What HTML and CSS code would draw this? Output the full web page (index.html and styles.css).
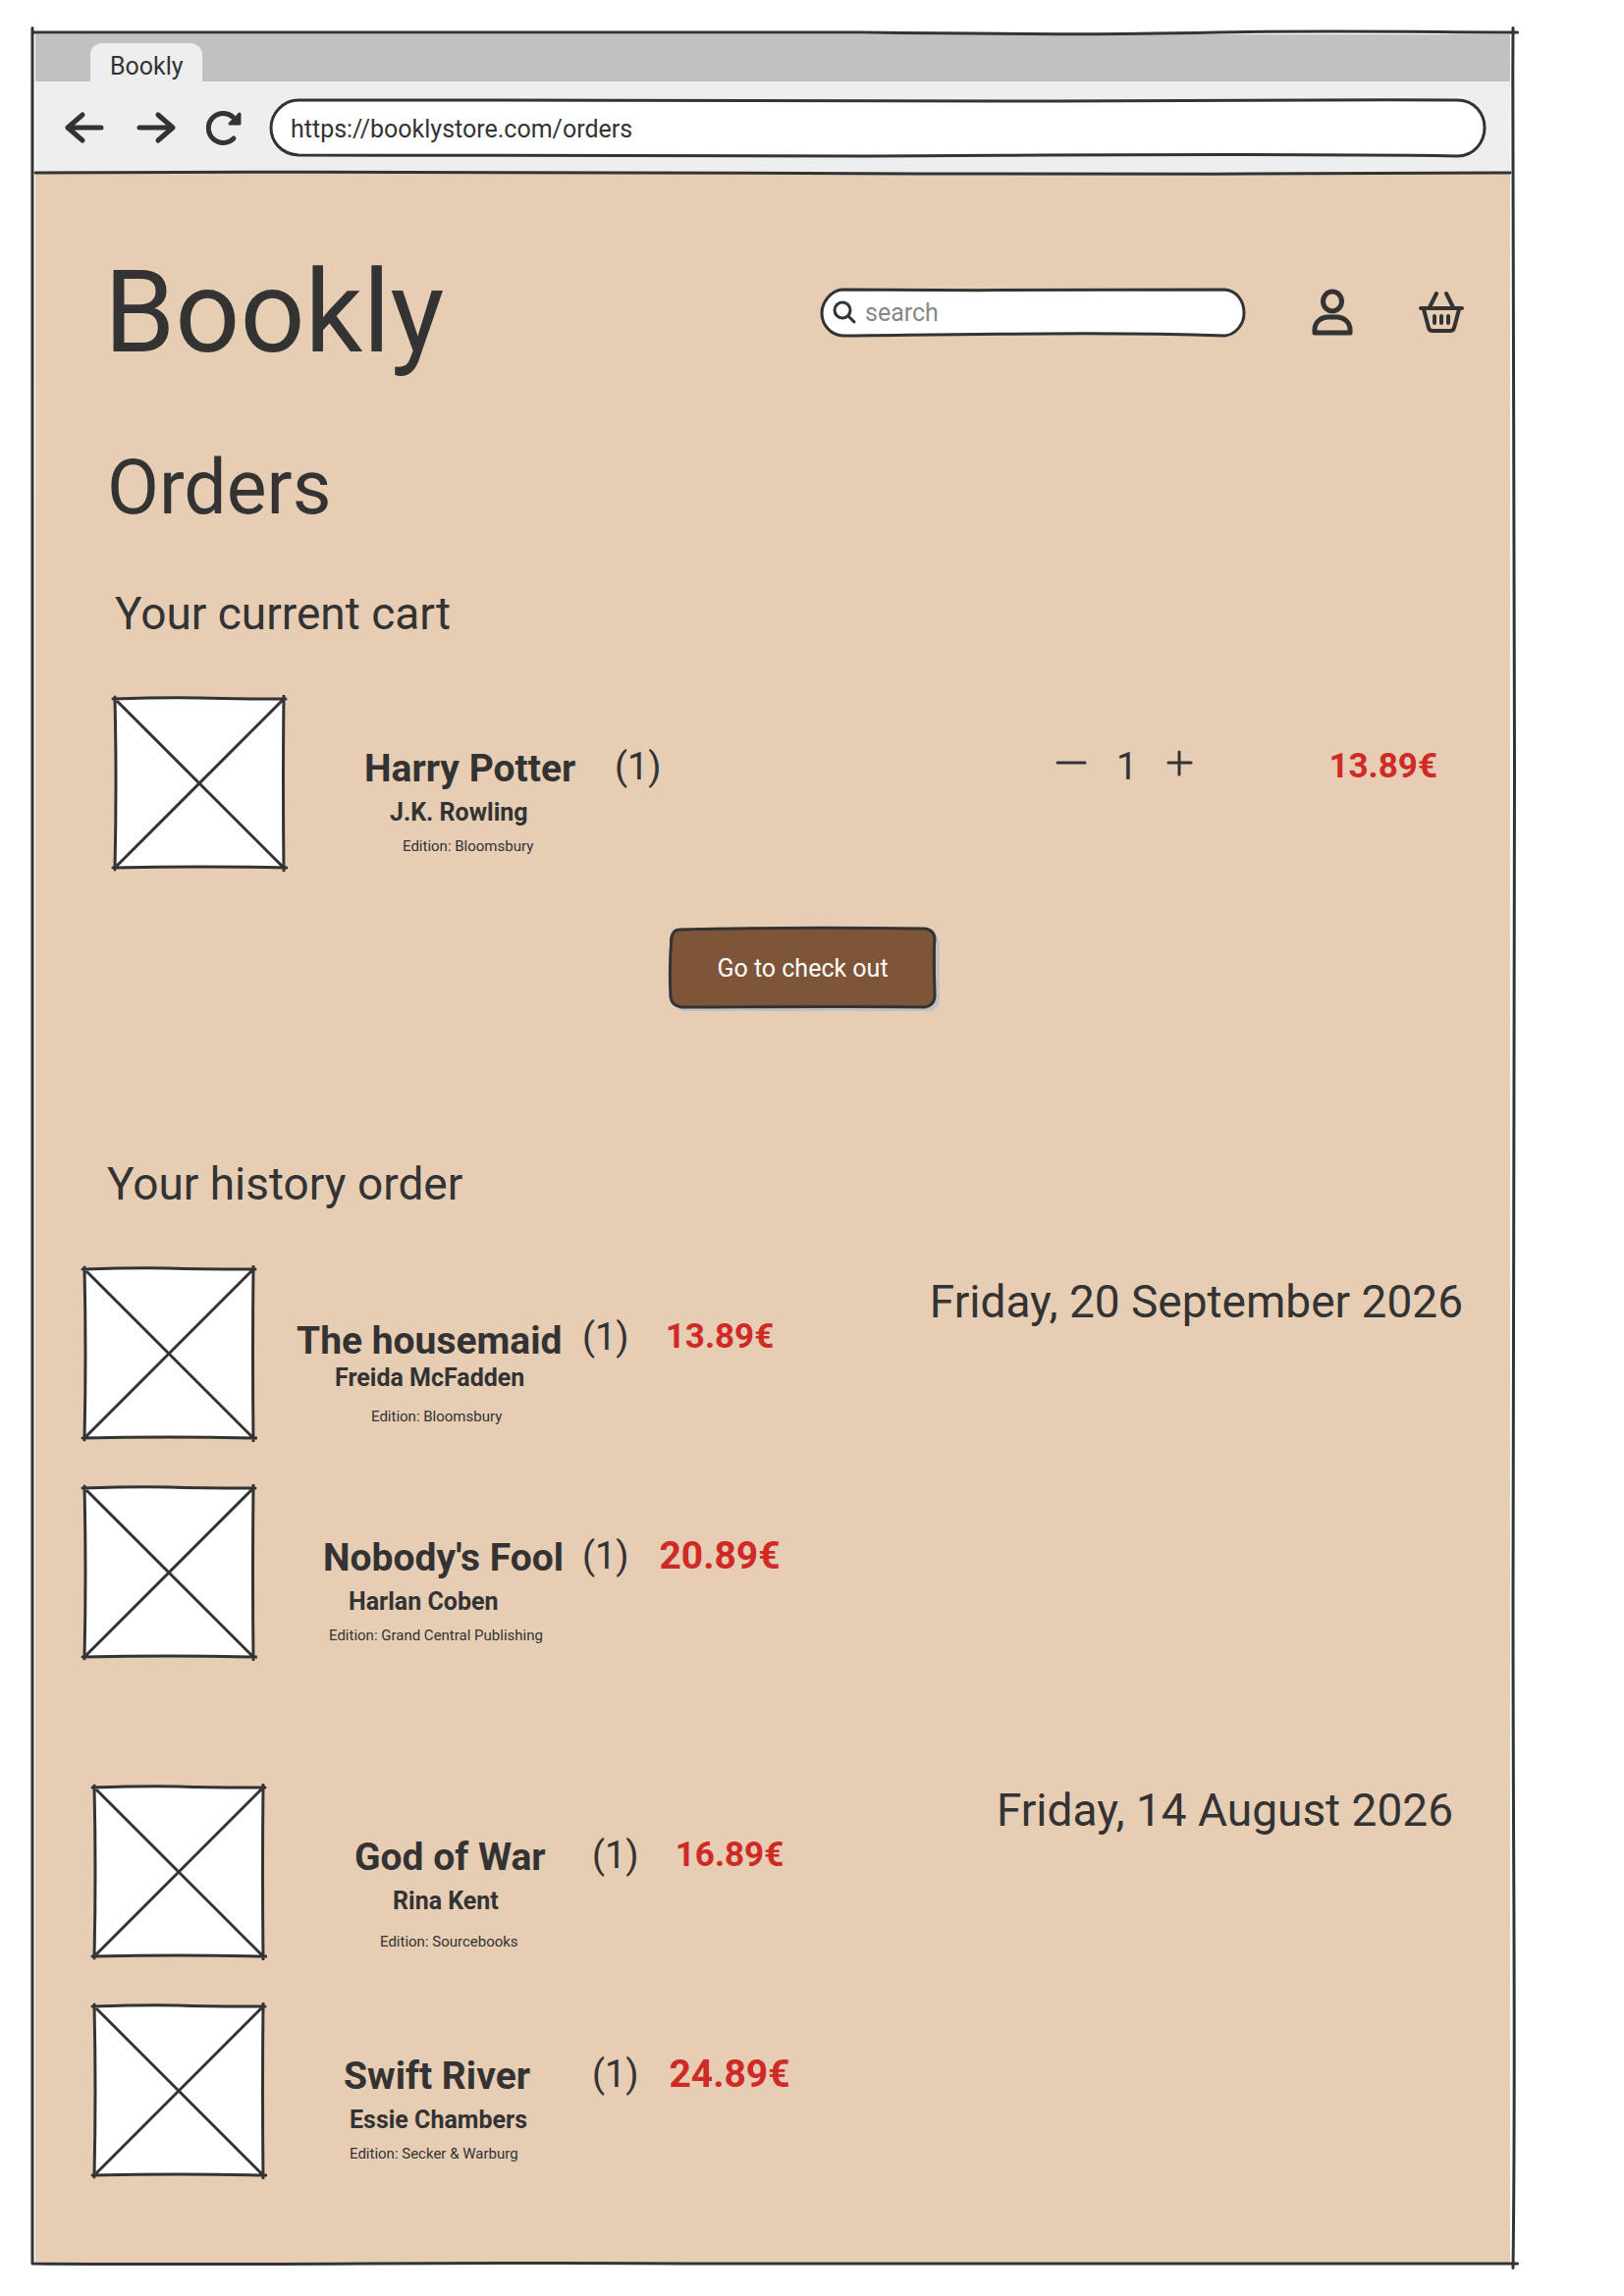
FILE: index.html
```html
<!DOCTYPE html>
<html lang="en">
<head>
<meta charset="utf-8">
<meta name="viewport" content="width=device-width, initial-scale=1">
<title>Bookly</title>
<link rel="stylesheet" href="styles.css">
</head>
<body>
<svg class="defs" aria-hidden="true">
  <symbol id="cover" viewBox="0 0 180 180">
    <path class="paper" d="M4 4H176V176H4Z"/>
    <path d="M2 4Q60 2 90 3T178 4M4 2Q6 90 4 178M176 1Q175 90 176 179M2 176Q90 174 179 176M7 7L176 176M176 4L7 173"/>
  </symbol>
</svg>
<div class="window">
  <svg class="outline" viewBox="0 0 1000 1000" preserveAspectRatio="none" aria-hidden="true">
    <path d="M0 0C200 -1 400 -1 560 0S720 1 800 0S950 0 1003 0M0 -2C1 200 -1 300 0 500S-1 800 0 1000M1000 -2C999 100 1001 200 1001 330S1000 560 1000 700S1002 900 1000 1002M0 1000C150 1001 300 999 450 1000S800 999 1003 1000"/>
  </svg>
  <header class="browser">
    <div class="tabs"><div class="tab">Bookly</div></div>
    <div class="toolbar">
      <button class="nav" aria-label="Back"><svg width="40" height="34" viewBox="0 0 40 34"><path d="M37 17H3M18 4L3 17L18 30"/></svg></button>
      <button class="nav" aria-label="Forward"><svg width="40" height="34" viewBox="0 0 40 34"><path d="M3 17H37M22 4L37 17L22 30"/></svg></button>
      <button class="nav" aria-label="Reload"><svg width="40" height="38" viewBox="4 0 40 38"><path d="M30 30A15 15 0 1 1 29 8"/><path class="solid" d="M36 5V15H26Z"/></svg></button>
      <div class="field address">
        <svg class="outline" viewBox="0 0 1236 58" preserveAspectRatio="none" aria-hidden="true"><path class="paper" d="M28 1C300 -1 500 4 800 2S1100 1 1208 1C1226 1 1236 15 1236 29S1226 58 1208 58C1000 55 850 57 600 58S200 57 28 57C10 56 0 43 0 29S12 1 28 1Z"/></svg>
        <input type="text" value="https://booklystore.com/orders" aria-label="Address">
      </div>
    </div>
    <svg class="rule" viewBox="0 0 1000 6" preserveAspectRatio="none" aria-hidden="true"><path d="M0 3C200 1 400 3 600 4S800 4 1000 3"/></svg>
  </header>

  <main class="page">
    <div class="masthead">
      <a class="brand" href="#">Bookly</a>
      <div class="field search">
        <svg class="outline" viewBox="0 0 430 47" preserveAspectRatio="none" aria-hidden="true"><path class="paper" d="M21 0C150 1 300 1 410 0C423 1 430 12 430 24S421 46 410 47C300 43 200 45 21 47C8 46 0 35 0 24S9 1 21 0Z"/></svg>
        <svg class="lens" width="25" height="25" viewBox="0 0 25 25" aria-hidden="true"><circle cx="10" cy="10" r="8"/><path d="M16 16L22 22"/></svg>
        <input type="search" placeholder="search" aria-label="Search">
      </div>
      <a class="icon account" href="#" aria-label="Account"><svg width="42" height="48" viewBox="0 0 42 48"><ellipse cx="21" cy="13" rx="9.500" ry="10"/><path d="M3 45V42C3 33 11 29 16 29H26C31 29 39 33 39 42V45Z"/></svg></a>
      <a class="icon" href="#" aria-label="Basket"><svg width="48" height="44" viewBox="0 0 48 44"><path d="M3 18H45M12 17L19 3M36 17L29 3M6 19L11 38Q12 41 15 41H33Q36 41 37 38L42 19M17 26V33M24 26V33M31 26V33"/></svg></a>
    </div>

    <h1>Orders</h1>

    <section class="cart">
      <h2>Your current cart</h2>
      <article class="book">
        <svg class="cover" role="img" aria-label="Harry Potter cover"><use href="#cover"/></svg>
        <div class="info start-l">
          <h3>Harry Potter</h3>
          <p class="author in-m">J.K. Rowling</p>
          <p class="edition in-l">Edition: Bloomsbury</p>
        </div>
        <span class="count">(1)</span>
        <div class="stepper">
          <button aria-label="Remove one"><svg width="34" height="28" viewBox="0 0 34 28"><path d="M3 14H31"/></svg></button>
          <output>1</output>
          <button aria-label="Add one"><svg width="28" height="28" viewBox="0 0 28 28"><path d="M3 14H26M14 3V26"/></svg></button>
        </div>
        <span class="price">13.89€</span>
      </article>
      <div class="actions">
        <button class="checkout">
          <svg class="outline" viewBox="0 0 271 80" preserveAspectRatio="none" aria-hidden="true"><path d="M10 1C90 -1 180 -1 260 0C267 1 270 5 270 11C268 30 270 50 270 70C269 76 266 79 260 80C180 79 90 80 12 80C5 79 2 76 1 70C0 50 0 30 2 9C3 4 5 1 10 1Z"/></svg>
          <span>Go to check out</span>
        </button>
      </div>
    </section>

    <section class="history">
      <h2>Your history order</h2>
      <section class="order">
        <div class="books">
          <article class="book">
            <svg class="cover" role="img" aria-label="The housemaid cover"><use href="#cover"/></svg>
            <div class="info start-s close">
              <h3>The housemaid</h3>
              <p class="author in-l">Freida McFadden</p>
              <p class="edition in-xl">Edition: Bloomsbury</p>
            </div>
            <span class="count">(1)</span>
            <span class="price">13.89€</span>
          </article>
          <article class="book">
            <svg class="cover" role="img" aria-label="Nobody's Fool cover"><use href="#cover"/></svg>
            <div class="info start-m">
              <h3>Nobody's Fool</h3>
              <p class="author in-m">Harlan Coben</p>
              <p class="edition in-s">Edition: Grand Central Publishing</p>
            </div>
            <span class="count">(1)</span>
            <span class="price large">20.89€</span>
          </article>
        </div>
        <time datetime="2026-09-20">Friday, 20 September 2026</time>
      </section>
      <section class="order inset">
        <div class="books">
          <article class="book">
            <svg class="cover" role="img" aria-label="God of War cover"><use href="#cover"/></svg>
            <div class="info start-xl open">
              <h3>God of War</h3>
              <p class="author in-l">Rina Kent</p>
              <p class="edition in-m">Edition: Sourcebooks</p>
            </div>
            <span class="count">(1)</span>
            <span class="price">16.89€</span>
          </article>
          <article class="book">
            <svg class="cover" role="img" aria-label="Swift River cover"><use href="#cover"/></svg>
            <div class="info start-l">
              <h3>Swift River</h3>
              <p class="author in-s">Essie Chambers</p>
              <p class="edition in-s">Edition: Secker &amp; Warburg</p>
            </div>
            <span class="count">(1)</span>
            <span class="price large">24.89€</span>
          </article>
        </div>
        <time datetime="2026-08-14">Friday, 14 August 2026</time>
      </section>
    </section>
  </main>
</div>
</body>
</html>
```
FILE: styles.css
```css
:root {
  --ink: #333;
  --sand: #e6cdb4;
  --red: #d02a26;
}
* { box-sizing: border-box; }
body {
  margin: 0;
  padding: 33px 113px 35px 33px;
  background: #fff;
  color: var(--ink);
  font-family: Roboto, "Liberation Sans", sans-serif;
  font-size: 25px;
}
h1, h2, h3, p { margin: 0; font-weight: 400; }
a { color: inherit; text-decoration: none; }
button {
  padding: 0;
  border: 0;
  background: none;
  color: inherit;
  font: inherit;
  cursor: pointer;
}
input {
  width: 100%;
  min-width: 0;
  padding: 0;
  border: 0;
  outline: 0;
  background: none;
  color: inherit;
  font: inherit;
}
svg {
  display: block;
  overflow: visible;
  fill: none;
  stroke: var(--ink);
  stroke-width: 3px;
  stroke-linecap: round;
  stroke-linejoin: round;
}
.defs { position: absolute; width: 0; height: 0; }
.paper { fill: #fff; }
#cover .paper { stroke: none; }

/* Hand-drawn outlines stretch with the box that they frame */
.outline {
  position: absolute;
  inset: 0;
  width: 100%;
  height: 100%;
  pointer-events: none;
}
.outline path, .rule path { vector-effect: non-scaling-stroke; }

.window { position: relative; padding: 2px 3px 1px 3px; }
.window > .outline { z-index: 1; }

/* Browser chrome */
.tabs {
  display: flex;
  height: 48px;
  padding: 9px 56px 0;
  background: #c1c1c1;
}
.tab {
  padding: 9px 19px 0 20px;
  border-radius: 12px 12px 0 0;
  background: #eee;
  line-height: 30px;
}
.toolbar {
  display: flex;
  align-items: center;
  height: 93px;
  padding: 0 26px 0 27px;
  background: #eee;
}
.nav { width: 46px; margin-right: 27px; }
.nav svg { margin: 0 auto; stroke-width: 5px; }
.nav .solid { fill: var(--ink); stroke-width: 3px; }
.field { position: relative; display: flex; align-items: center; }
.field input { position: relative; }
.address { flex: 1; height: 58px; margin-left: -6px; padding: 4px 20px 0; }
.rule { width: 100%; height: 6px; margin: -3px 0; position: relative; }

/* Shop page */
.page { padding: 74px 46px 89px 50px; background: var(--sand); }
.masthead { display: flex; align-items: center; padding-left: 20px; }
.brand { flex: 1; font-size: 116px; line-height: 136px; }
.search { width: 430px; height: 47px; gap: 8px; padding: 0 16px 0 11px; }
.search .lens { position: relative; flex: none; }
.search input::placeholder { color: #888; opacity: 1; }
.icon svg { stroke-width: 4px; }
.account { margin: 0 66px 0 69px; }
.account svg { stroke-width: 5px; }

h1 { padding: 66px 0 0 23px; font-size: 77px; line-height: 90px; }
h2 { font-size: 46px; line-height: 54px; }
.cart { padding: 56px 28px 0 31px; }
.history { padding: 153px 2px 0 0; }
.history > h2 { padding: 0 23px; }

.book {
  display: flex;
  align-items: flex-start;
  line-height: 46px;
}
.cover { flex: none; width: 180px; height: 180px; margin: -4px; }
.info { width: 335px; padding-top: 48px; white-space: nowrap; }
.info h3 { font-size: 39px; font-weight: 700; }
.author { margin: 7px 0 9px; font-weight: 700; line-height: 30px; }
.edition { font-size: 15px; line-height: 20px; }
.close { padding-top: 50px; }
.close .author { margin: 0 0 14px; }
.open .author { margin-bottom: 16px; }
.start-s { padding-left: 44px; }
.start-m { padding-left: 71px; }
.start-l { padding-left: 82px; }
.start-xl { padding-left: 93px; }
.in-s { padding-left: 6px; }
.in-m { padding-left: 26px; }
.in-l { padding-left: 39px; }
.in-xl { padding-left: 76px; }
.count { width: 60px; padding-top: 46px; font-size: 38px; }
.price {
  width: 160px;
  padding-top: 46px;
  color: var(--red);
  font-size: 35px;
  font-weight: 700;
  text-align: center;
}
.price.large { font-size: 39px; }

.cart .book { margin-top: 60px; }
.cart .info { width: 337px; }
.stepper {
  display: flex;
  align-items: center;
  gap: 29px;
  margin-left: auto;
  padding-top: 46px;
  font-size: 38px;
}
.stepper button svg { margin-top: -8px; }
.cart .price { width: auto; margin-left: 138px; }

.actions { padding: 62px 0 0 54px; }
.checkout {
  position: relative;
  display: block;
  width: 271px;
  height: 80px;
  margin: 0 auto;
  border-radius: 12px;
  background: #7f5539;
  box-shadow: 4px 4px 0 #c1c1c1;
  color: #fff;
}
.checkout span { position: relative; }

.order {
  display: flex;
  justify-content: space-between;
  margin-top: 60px;
}
.books { display: grid; gap: 51px; }
.order time { padding-top: 10px; font-size: 46px; line-height: 46px; }
.order.inset { margin-top: 133px; padding: 0 10px; }
.order.inset time { padding-top: 0; }
```
